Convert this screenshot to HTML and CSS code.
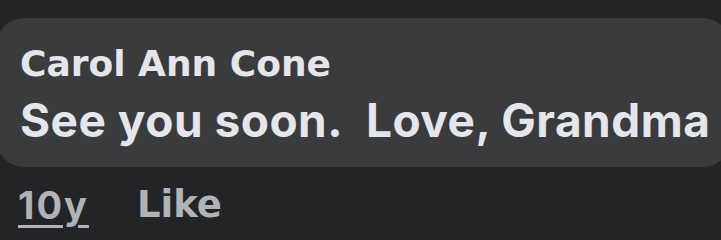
FILE: index.html
```html
<!DOCTYPE html>
<html>
<head>
<meta charset="utf-8">
<link rel="stylesheet" href="styles.css">
</head>
<body>
<div class="comment">
  <div class="bubble">
    <div class="name">Carol Ann Cone</div>
    <div class="message">See you soon.&nbsp; Love, Grandma</div>
  </div>
  <div class="actions">
    <span class="time">10y</span>
    <span class="like">Like</span>
  </div>
</div>
</body>
</html>
```
FILE: styles.css
```css
html, body {
  margin: 0;
  padding: 0;
  background: #232426;
  overflow: hidden;
}
body {
  width: 721px;
  height: 240px;
  font-family: "Liberation Sans", Arial, sans-serif;
}
.comment {
  padding-top: 18px;
}
.bubble {
  margin-left: -5px;
  width: 737px;
  box-sizing: border-box;
  background: #3a3b3c;
  border-radius: 30px;
  padding: 24px 0 20px 25px;
  color: #e4e6eb;
}
.name {
  font-family: "DejaVu Sans", sans-serif;
  font-size: 36px;
  font-weight: 700;
  line-height: 44px;
  white-space: nowrap;
}
.message {
  margin-top: 7px;
  font-family: Inter, sans-serif;
  font-size: 46px;
  font-weight: 700;
  letter-spacing: 0.5px;
  line-height: 54px;
  white-space: nowrap;
}
.actions {
  display: flex;
  gap: 48px;
  margin-top: 18px;
  padding-left: 18px;
  color: #b0b3b8;
  line-height: 40px;
}
.time {
  font-family: Inter, sans-serif;
  font-size: 38px;
  font-weight: 700;
  letter-spacing: 2px;
  text-decoration: underline;
  text-decoration-thickness: 3px;
  text-underline-offset: 6px;
}
.like {
  font-family: "DejaVu Sans", sans-serif;
  font-size: 37px;
  font-weight: 700;
}
```
